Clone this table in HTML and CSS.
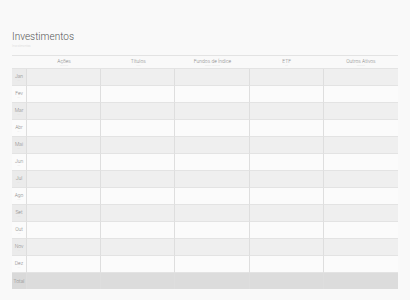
FILE: index.html
```html
<!DOCTYPE html>
<html>
<head>
<meta charset="utf-8">
<link rel="stylesheet" href="styles.css">
</head>
<body>
<div class="page">
  <div class="title">Investimentos</div>
  <div class="subtitle">Investimentos</div>
  <div class="grid">
    <div class="hcell month"></div>
    <div class="hcell"><span class="hname">Ações</span><span class="hsub">mensal</span></div>
    <div class="hcell"><span class="hname">Títulos</span><span class="hsub">fixa</span></div>
    <div class="hcell"><span class="hname">Fundos de Índice</span><span class="hsub">índice mensal</span></div>
    <div class="hcell"><span class="hname">ETF</span><span class="hsub">etf</span></div>
    <div class="hcell"><span class="hname">Outros Ativos</span><span class="hsub">mensal</span></div>

    <div class="row odd"><div class="mcell"><span class="mname">Jan</span><span class="msub">01</span></div><div class="cell"></div><div class="cell"></div><div class="cell"></div><div class="cell"></div><div class="cell"></div></div>
    <div class="row"><div class="mcell"><span class="mname">Fev</span><span class="msub">02</span></div><div class="cell"></div><div class="cell"></div><div class="cell"></div><div class="cell"></div><div class="cell"></div></div>
    <div class="row odd"><div class="mcell"><span class="mname">Mar</span><span class="msub">03</span></div><div class="cell"></div><div class="cell"></div><div class="cell"></div><div class="cell"></div><div class="cell"></div></div>
    <div class="row"><div class="mcell"><span class="mname">Abr</span><span class="msub">04</span></div><div class="cell"></div><div class="cell"></div><div class="cell"></div><div class="cell"></div><div class="cell"></div></div>
    <div class="row odd"><div class="mcell"><span class="mname">Mai</span><span class="msub">05</span></div><div class="cell"></div><div class="cell"></div><div class="cell"></div><div class="cell"></div><div class="cell"></div></div>
    <div class="row"><div class="mcell"><span class="mname">Jun</span><span class="msub">06</span></div><div class="cell"></div><div class="cell"></div><div class="cell"></div><div class="cell"></div><div class="cell"></div></div>
    <div class="row odd"><div class="mcell"><span class="mname">Jul</span><span class="msub">07</span></div><div class="cell"></div><div class="cell"></div><div class="cell"></div><div class="cell"></div><div class="cell"></div></div>
    <div class="row"><div class="mcell"><span class="mname">Ago</span><span class="msub">08</span></div><div class="cell"></div><div class="cell"></div><div class="cell"></div><div class="cell"></div><div class="cell"></div></div>
    <div class="row odd"><div class="mcell"><span class="mname">Set</span><span class="msub">09</span></div><div class="cell"></div><div class="cell"></div><div class="cell"></div><div class="cell"></div><div class="cell"></div></div>
    <div class="row"><div class="mcell"><span class="mname">Out</span><span class="msub">10</span></div><div class="cell"></div><div class="cell"></div><div class="cell"></div><div class="cell"></div><div class="cell"></div></div>
    <div class="row odd"><div class="mcell"><span class="mname">Nov</span><span class="msub">11</span></div><div class="cell"></div><div class="cell"></div><div class="cell"></div><div class="cell"></div><div class="cell"></div></div>
    <div class="row"><div class="mcell"><span class="mname">Dez</span><span class="msub">12</span></div><div class="cell"></div><div class="cell"></div><div class="cell"></div><div class="cell"></div><div class="cell"></div></div>
    <div class="row total"><div class="mcell"><span class="mname">Total</span></div><div class="cell"></div><div class="cell"></div><div class="cell"></div><div class="cell"></div><div class="cell"></div></div>
  </div>
</div>
</body>
</html>
```
FILE: styles.css
```css
html, body {
  margin: 0;
  padding: 0;
  background: #f9f9f9;
}
body {
  font-family: Roboto, "Liberation Sans", sans-serif;
  font-weight: 300;
  color: #777;
}
.page {
  padding: 31px 12px 0 12px;
  width: 386px;
}
.title {
  font-size: 10px;
  line-height: 12px;
  color: #555;
}
.subtitle {
  font-size: 3px;
  line-height: 5px;
  color: #d6d6d6;
  margin-top: 1px;
}
.grid {
  margin-top: 6px;
  display: grid;
  grid-template-columns: 15px repeat(5, 1fr);
  border-top: 1px solid #e3e3e3;
}
.hcell {
  height: 12px;
  display: flex;
  flex-direction: column;
  align-items: center;
  justify-content: center;
  border-bottom: 1px solid #e3e3e3;
}
.hname {
  font-size: 5px;
  line-height: 6px;
  color: #888;
}
.hsub {
  font-size: 2.5px;
  line-height: 3px;
  color: #ddd;
}
.row {
  display: contents;
}
.mcell, .cell {
  height: 16px;
  border-bottom: 1px solid #e3e3e3;
}
.mcell {
  display: flex;
  flex-direction: column;
  align-items: center;
  justify-content: center;
  border-right: 1px solid #dedede;
}
.cell {
  border-right: 1px solid #dedede;
}
.cell:last-child {
  border-right: none;
}
.mname {
  font-size: 5px;
  line-height: 6px;
  color: #888;
}
.msub {
  font-size: 2.5px;
  line-height: 3px;
  color: #ddd;
}
.row > div {
  background: #fbfbfb;
}
.row.odd > div {
  background: #efefef;
}
.row.odd > .mcell {
  background: #ebebeb;
}
.row.total > div {
  background: #dcdcdc;
  border-bottom: none;
}
.row.total > .mcell {
  background: #d9d9d9;
}
```
